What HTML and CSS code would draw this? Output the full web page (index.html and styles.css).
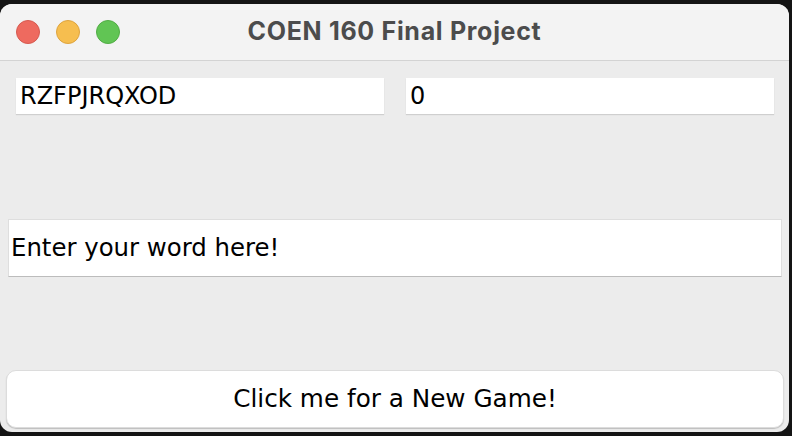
FILE: index.html
```html
<!DOCTYPE html>
<html>
<head>
<meta charset="utf-8">
<title>COEN 160 Final Project</title>
<link rel="stylesheet" href="styles.css">
</head>
<body>
<div class="window">
  <div class="titlebar">
    <div class="lights">
      <span class="light red"></span>
      <span class="light yellow"></span>
      <span class="light green"></span>
    </div>
    <div class="title">COEN 160 Final Project</div>
  </div>
  <div class="content">
    <div class="row">
      <div class="field">RZFPJRQXOD</div>
      <div class="field">0</div>
    </div>
    <div class="word">Enter your word here!</div>
    <div class="button">Click me for a New Game!</div>
  </div>
</div>
</body>
</html>
```
FILE: styles.css
```css
html, body {
  margin: 0;
  padding: 0;
  width: 792px;
  height: 436px;
  overflow: hidden;
  background: #141414;
}
body {
  padding-top: 4px;
  box-sizing: border-box;
  font-family: "DejaVu Sans", "Liberation Sans", sans-serif;
}
.window {
  width: 789px;
  height: 428px;
  border-radius: 12px;
  overflow: hidden;
  background: #ececec;
  display: flex;
  flex-direction: column;
}
.titlebar {
  height: 56px;
  flex: none;
  background: #f3f3f3;
  border-bottom: 1px solid #d3d3d3;
  display: flex;
  align-items: center;
  position: relative;
}
.lights {
  display: flex;
  gap: 16px;
  padding-left: 16px;
}
.light {
  width: 24px;
  height: 24px;
  border-radius: 50%;
  box-sizing: border-box;
}
.red { background: #ee6a5f; border: 1px solid #d65a50; }
.yellow { background: #f6be4f; border: 1px solid #dea43e; }
.green { background: #61c554; border: 1px solid #52ad45; }
.title {
  position: absolute;
  left: 0;
  right: 0;
  top: 12px;
  text-align: center;
  font-family: Inter, "Liberation Sans", sans-serif;
  font-weight: 700;
  font-size: 25px;
  letter-spacing: 0.7px;
  color: #4c4c4c;
}
.content {
  flex: 1;
  display: flex;
  flex-direction: column;
  padding: 17px 0 4px 0;
}
.row {
  display: flex;
  gap: 22px;
  padding-left: 16px;
}
.field {
  width: 368px;
  height: 36px;
  background: #fff;
  box-shadow: 0 1px 1px #cfcfcf;
  font-size: 24px;
  line-height: 36px;
  padding-left: 4px;
  box-sizing: border-box;
  color: #000;
}
.word {
  margin: 105px 0 0 8px;
  width: 774px;
  height: 58px;
  box-sizing: border-box;
  background: #fff;
  border: 1px solid #dedede;
  border-bottom-color: #bcbcbc;
  font-size: 24.4px;
  line-height: 56px;
  padding-left: 2px;
  color: #000;
}
.button {
  margin: 93px 0 0 6px;
  width: 778px;
  height: 58px;
  box-sizing: border-box;
  background: #fff;
  border: 1px solid #dcdcdc;
  border-radius: 10px;
  box-shadow: 0 1px 1px #bdbdbd;
  font-size: 24.7px;
  line-height: 56px;
  text-align: center;
  color: #000;
}
```
